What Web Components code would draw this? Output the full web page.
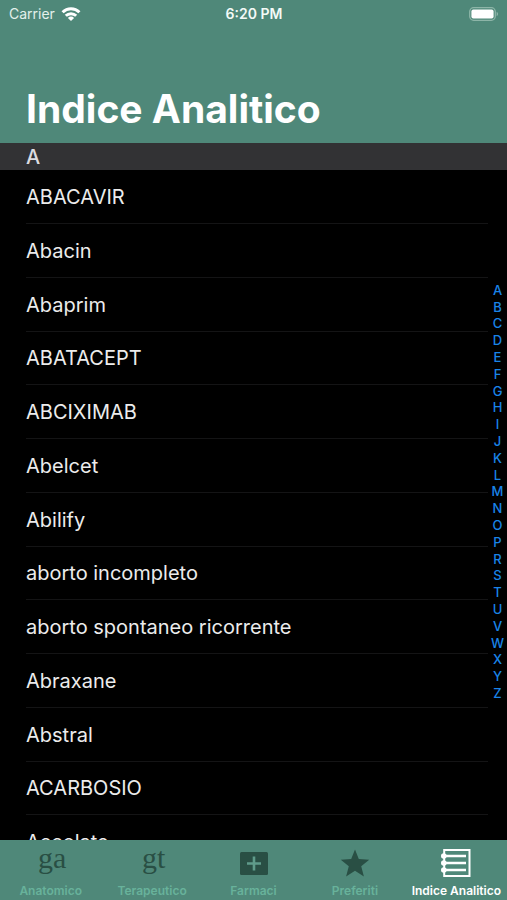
<!DOCTYPE html>
<html lang="it">
<head>
<meta charset="utf-8">
<meta name="viewport" content="width=device-width, initial-scale=1">
<title>Indice Analitico</title>
<style>
  html, body { margin: 0; height: 100%; background: #000; }
  body { font-family: Inter, "Liberation Sans", sans-serif; color: #fff; }
</style>
</head>
<body>
<index-app></index-app>
<script>
  class BaseElement extends HTMLElement {
    constructor() {
      super();
      this.attachShadow({ mode: "open" });
    }
    connectedCallback() {
      this.shadowRoot.innerHTML = "<style>*{box-sizing:border-box}" + this.styles() + "</style>" + this.markup();
    }
  }

  customElements.define("status-bar", class extends BaseElement {
    styles() {
      return `
        :host { display: grid; grid-template-columns: 1fr auto 1fr; align-items: center;
                height: 28px; padding: 0 8px 0 9px; font-size: 14px; line-height: 20px; }
        .left { display: flex; align-items: center; gap: 6px; color: #e3f0eb; }
        .time { font-weight: 600; color: #f3faf7; }
        .battery { justify-self: end; }
        svg { display: block; }`;
    }
    markup() {
      return `
        <div class="left"><span>Carrier</span>
          <svg width="20" height="14" viewBox="0 0 20 14" fill="none" stroke="#fff" stroke-width="3" aria-hidden="true">
            <path d="M1.6 5.300a11.900 11.900 0 0 1 16.800 0"/>
            <path d="M4.800 8.800a7.400 7.400 0 0 1 10.400 0"/>
            <path d="M10 14 6.900 10.900a4.400 4.400 0 0 1 6.200 0z" fill="#fff" stroke="none"/>
          </svg>
        </div>
        <span class="time">6:20 PM</span>
        <svg class="battery" width="30" height="14" viewBox="0 0 30 14" aria-hidden="true">
          <rect x=".7" y=".7" width="25.6" height="12.6" rx="4" fill="none" stroke="#8db5a8" stroke-width="1.3"/>
          <rect x="2.4" y="2.4" width="22.2" height="9.2" rx="2" fill="#fff"/>
          <path d="M27.6 4.8c2 .8 2 3.600 0 4.400z" fill="#8db5a8"/>
        </svg>`;
    }
  });

  customElements.define("large-title", class extends BaseElement {
    styles() {
      return `
        :host { display: block; padding: 57px 26px 10px; }
        h1 { margin: 0; font-size: 39px; line-height: 48px; font-weight: 700; white-space: nowrap; }`;
    }
    markup() { return `<h1><slot></slot></h1>`; }
  });

  customElements.define("section-heading", class extends BaseElement {
    styles() {
      return `
        :host { display: block; background: #323234; }
        h2 { margin: 0; padding: 1px 26px 0; font-size: 20px; line-height: 26px; font-weight: 500; color: #dcdce0; }`;
    }
    markup() { return `<h2><slot></slot></h2>`; }
  });

  customElements.define("term-list", class extends BaseElement {
    styles() {
      return `
        :host { display: block; }
        ul { list-style: none; margin: 0; padding: 0 19px 0 26px; }
        li { height: 54px; border-bottom: 1px solid #141415; }
        li:nth-child(4n) { height: 53px; }
        a { display: flex; align-items: center; height: 100%; color: #ececec; text-decoration: none;
            font-size: 20px; line-height: 26px; }`;
    }
    markup() {
      const terms = ["ABACAVIR", "Abacin", "Abaprim", "ABATACEPT", "ABCIXIMAB", "Abelcet", "Abilify",
        "aborto incompleto", "aborto spontaneo ricorrente", "Abraxane", "Abstral", "ACARBOSIO", "Accolate"];
      return `<ul>${terms.map(t => `<li><a href="#${encodeURIComponent(t)}">${t}</a></li>`).join("")}</ul>`;
    }
  });

  customElements.define("letter-index", class extends BaseElement {
    styles() {
      return `
        :host { display: flex; align-items: center; }
        nav { display: flex; flex-direction: column; width: 19px; height: 420px; }
        a { flex: 1; display: flex; align-items: center; justify-content: center;
            color: #1a84e8; text-decoration: none; font-size: 13px; font-weight: 500; line-height: 16px; }`;
    }
    markup() {
      return `<nav aria-label="Lettere">${[..."ABCDEFGHIJKLMNOPRSTUVWXYZ"].map(l => `<a href="#${l}">${l}</a>`).join("")}</nav>`;
    }
  });

  customElements.define("tab-item", class extends BaseElement {
    styles() {
      return `
        :host { display: block; flex: 1; min-width: 0; }
        button { display: flex; flex-direction: column; align-items: center; width: 100%; height: 100%;
                 margin: 0; padding: 7px 0 0; border: 0; background: none; font: inherit; color: #68b29b; }
        .icon { display: flex; align-items: center; justify-content: center; height: 32px; color: #294f44; }
        .label { font-size: 12px; line-height: 16px; padding-top: 4px; font-weight: 600; white-space: nowrap; }
        :host([selected]) button, :host([selected]) .icon { color: #fff; }`;
    }
    markup() {
      const current = this.hasAttribute("selected") ? ' aria-current="page"' : "";
      return `<button type="button"${current}><span class="icon"><slot name="icon"></slot></span><span class="label"><slot></slot></span></button>`;
    }
  });

  customElements.define("tab-bar", class extends BaseElement {
    styles() {
      return `
        :host { display: block; background: #4f8879; }
        nav { display: flex; height: 60px; }
        svg { display: block; }
        .glyph { font: 30px/30px "Liberation Serif", serif; padding: 0 0 10px 3px; }`;
    }
    markup() {
      return `
        <nav aria-label="Sezioni">
          <tab-item><span slot="icon" class="glyph">ga</span>Anatomico</tab-item>
          <tab-item><span slot="icon" class="glyph">gt</span>Terapeutico</tab-item>
          <tab-item>
            <svg slot="icon" width="28" height="24" viewBox="0 0 28 24" aria-hidden="true">
              <rect y="1" width="28" height="23" rx="1.5" fill="currentColor"/>
              <path d="M14 5.500v14M7 12.500h14" stroke="#5f9b8a" stroke-width="2.600"/>
            </svg>Farmaci</tab-item>
          <tab-item>
            <svg slot="icon" width="30" height="28" viewBox="0 0 30 28" aria-hidden="true">
              <path fill="currentColor" d="M15 .5l3.800 9.500 10.400.7-8 6.600 2.700 10.200L15 21.800l-8.900 5.700 2.700-10.200-8-6.600L11.200 10z"/>
            </svg>Preferiti</tab-item>
          <tab-item selected>
            <svg slot="icon" width="30" height="28" viewBox="0 0 30 28" fill="none" stroke="currentColor" aria-hidden="true">
              <path d="M3.200 1h25.300v26H3.200z" stroke-width="2"/>
              <path d="M3 7h22M3 14h22M3 21h22" stroke-width="2.400"/>
              <g fill="currentColor" stroke="none"><circle cx="2.800" cy="7" r="2.800"/><circle cx="2.800" cy="14" r="2.800"/><circle cx="2.800" cy="21" r="2.800"/></g>
            </svg>Indice Analitico</tab-item>
        </nav>`;
    }
  });

  customElements.define("index-app", class extends BaseElement {
    styles() {
      return `
        :host { display: flex; flex-direction: column; height: 100vh; }
        header { background: #4f8879; }
        main { flex: 1; min-height: 0; display: grid; grid-template-rows: minmax(0, 1fr); overflow: hidden; background: #000; }
        .content, letter-index { grid-area: 1 / 1; }
        .content { overflow: hidden; }
        letter-index { justify-self: end; }`;
    }
    markup() {
      return `
        <header><status-bar></status-bar><large-title>Indice Analitico</large-title></header>
        <main>
          <div class="content"><section-heading>A</section-heading><term-list></term-list></div>
          <letter-index></letter-index>
        </main>
        <tab-bar></tab-bar>`;
    }
  });
</script>
</body>
</html>
